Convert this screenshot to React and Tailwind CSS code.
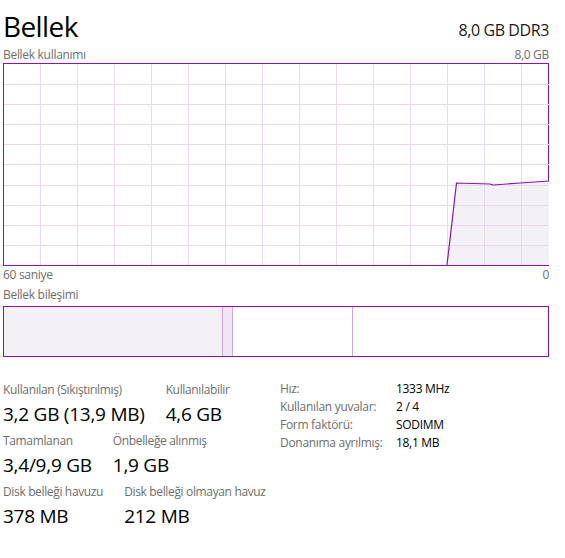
import React from 'react'

// ── Data ────────────────────────────────────────────────────────────────────

const FONT = { fontFamily: '"Segoe UI", "Open Sans", "Noto Sans", sans-serif' }

const GRID_X = Array.from({ length: 14 }, (_, i) => 36 + i * 37)
const GRID_Y = Array.from({ length: 9 }, (_, i) => 20 + i * 20.1)

const USAGE = [
  [443, 201],
  [452.5, 119],
  [486, 120],
  [489, 121],
  [516, 119],
  [545, 117],
]

const STATS = [
  [
    { label: 'Kullanılan (Sıkıştırılmış)', value: '3,2 GB (13,9 MB)' },
    { label: 'Kullanılabilir', value: '4,6 GB' },
  ],
  [
    { label: 'Tamamlanan', value: '3,4/9,9 GB' },
    { label: 'Önbelleğe alınmış', value: '1,9 GB' },
  ],
  [
    { label: 'Disk belleği havuzu', value: '378 MB' },
    { label: 'Disk belleği olmayan havuz', value: '212 MB' },
  ],
]

const DETAILS = [
  ['Hız:', '1333 MHz'],
  ['Kullanılan yuvalar:', '2 / 4'],
  ['Form faktörü:', 'SODIMM'],
  ['Donanıma ayrılmış:', '18,1 MB'],
]

// ── Chart ───────────────────────────────────────────────────────────────────

function UsageChart() {
  const line = USAGE.map(([x, y]) => `${x},${y}`).join(' ')
  const area = `${line} 545,201`
  return (
    <div className="h-[203px] border border-[#8b12ae]">
      <svg width="545" height="201" viewBox="0 0 545 201" className="block">
        <polygon points={area} fill="#f4f1f6" />
        {GRID_X.map(x => (
          <line key={x} x1={x + 0.5} y1="0" x2={x + 0.5} y2="201" stroke="#e9d9ef" strokeWidth="1" />
        ))}
        {GRID_Y.map(y => (
          <line key={y} x1="0" y1={Math.round(y) + 0.5} x2="545" y2={Math.round(y) + 0.5} stroke="#e9d9ef" strokeWidth="1" />
        ))}
        <polyline points={line} fill="none" stroke="#8b12ae" strokeWidth="1.2" />
      </svg>
    </div>
  )
}

// ── App ──────────────────────────────────────────────────────────────────────

export default function App() {
  return (
    <div className="w-[565px] h-[558px] bg-white pl-[3px] pr-[16px] text-black overflow-hidden" style={FONT}>
      {/* Header */}
      <div className="h-[46px] flex items-end justify-between">
        <span className="text-[28px] leading-[40px] tracking-[-0.6px] text-black">Bellek</span>
        <span className="text-[16px] leading-[24px] mb-[4px] tracking-[-0.4px] text-[#1a1a1a]">8,0 GB DDR3</span>
      </div>

      <div className="h-[17px] flex items-center justify-between text-[12px] tracking-[-0.3px] text-[#6e6e6e]">
        <span>Bellek kullanımı</span>
        <span>8,0 GB</span>
      </div>

      <UsageChart />

      <div className="h-[18px] flex items-center justify-between text-[12px] tracking-[-0.3px] text-[#6e6e6e]">
        <span>60 saniye</span>
        <span>0</span>
      </div>

      <div className="h-[21px] flex items-center text-[12px] tracking-[-0.3px] text-[#6e6e6e]">Bellek bileşimi</div>

      {/* Composition bar */}
      <div className="mt-[1px] h-[51px] border border-[#8b12ae] flex">
        <div className="w-[219px] bg-[#f3f1f5] border-r border-[#cba4da]" />
        <div className="w-[10px] bg-[#efe5f3] border-r border-[#cba4da]" />
        <div className="w-[120px] border-r border-[#cba4da]" />
        <div className="flex-1" />
      </div>

      {/* Stats */}
      <div className="mt-[23px] flex">
        <div className="w-[277px]">
          {STATS.map((row, i) => (
            <div key={i} className="flex gap-[21px] mb-[3px]">
              {row.map(s => (
                <div key={s.label} className="flex flex-col">
                  <span className="text-[12px] leading-[20px] tracking-[-0.35px] text-[#6e6e6e] whitespace-nowrap">{s.label}</span>
                  <span className="text-[19px] leading-[28px] tracking-[-0.25px] whitespace-nowrap">{s.value}</span>
                </div>
              ))}
            </div>
          ))}
        </div>
        <div className="flex flex-col">
          {DETAILS.map(([k, v]) => (
            <div key={k} className="flex text-[12px] leading-[18px] tracking-[-0.3px]">
              <span className="w-[116px] text-[#6e6e6e] whitespace-nowrap">{k}</span>
              <span className="whitespace-nowrap">{v}</span>
            </div>
          ))}
        </div>
      </div>
    </div>
  )
}
